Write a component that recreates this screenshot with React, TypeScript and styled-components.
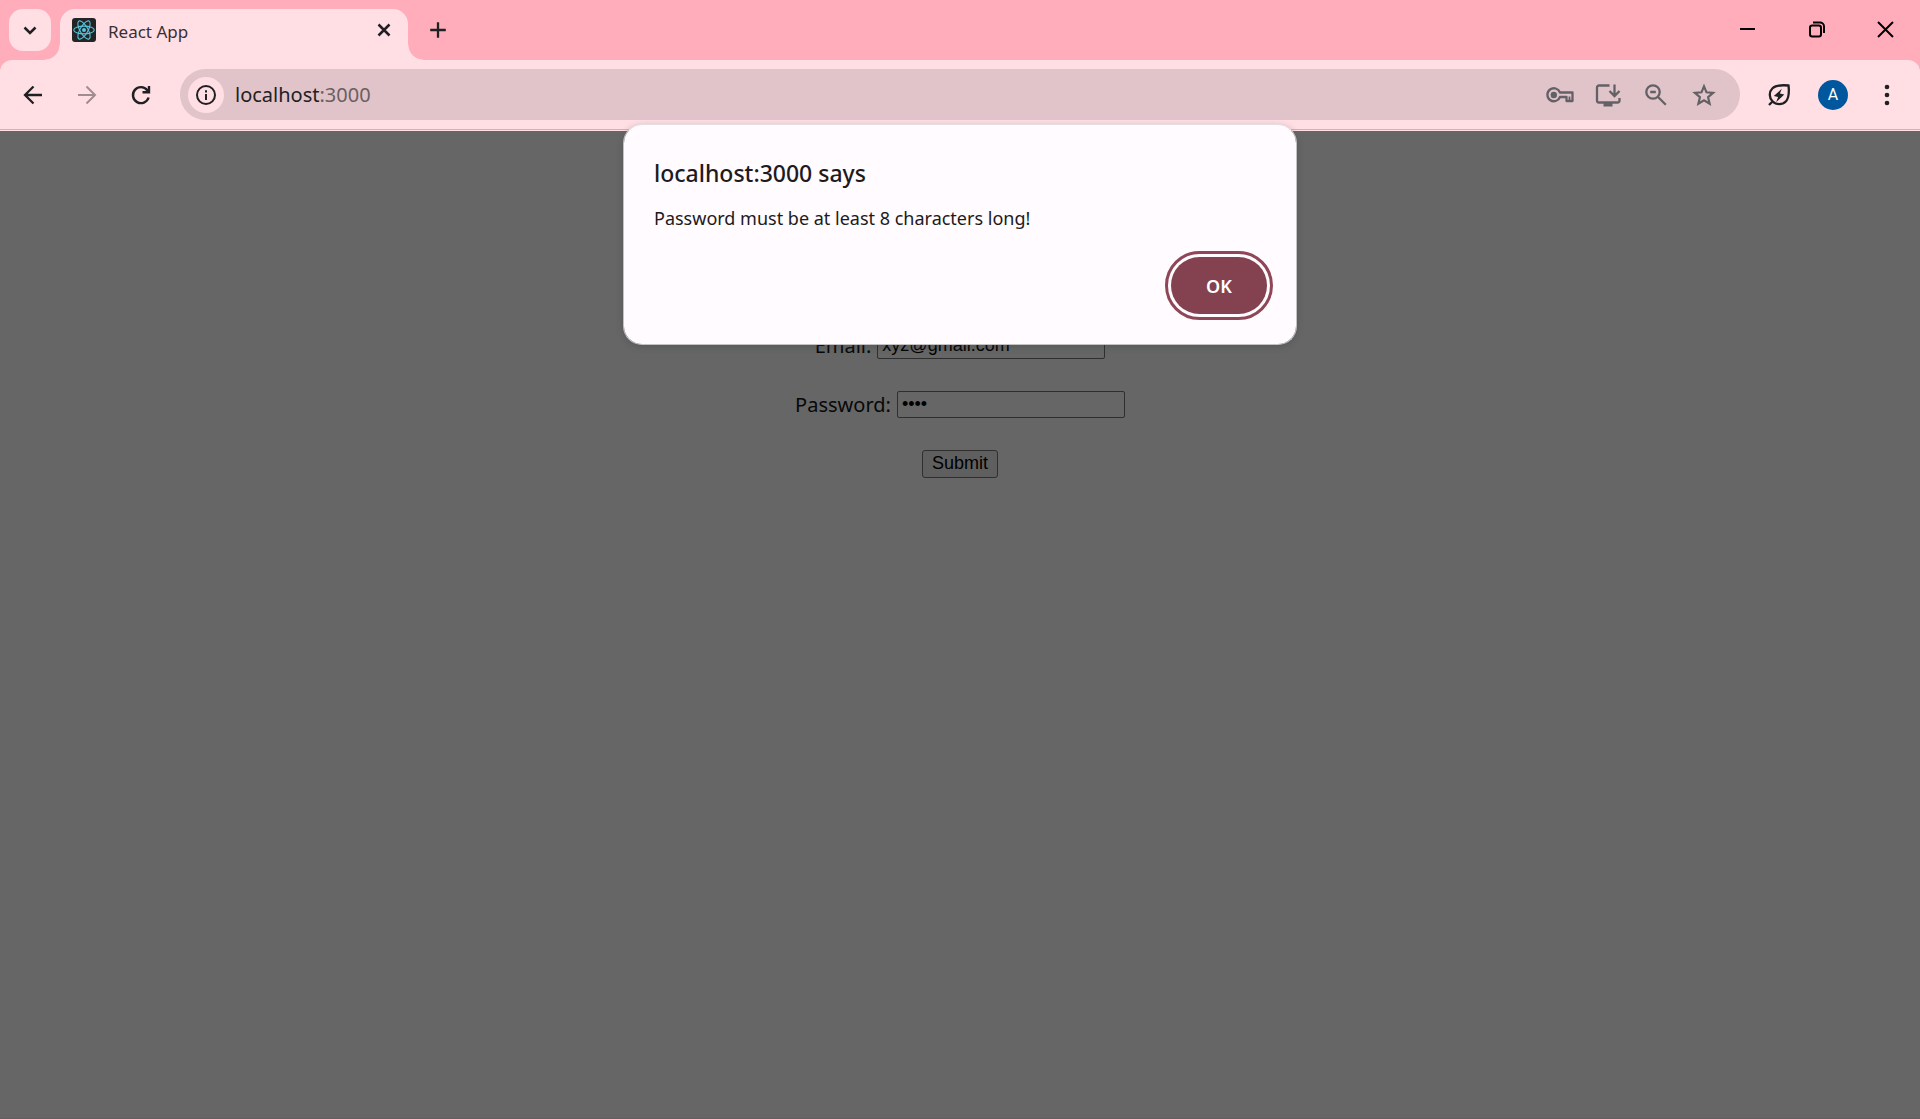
import React, { useState } from "react";
import styled, { createGlobalStyle } from "styled-components";

const UI_FONT = `"Segoe UI", "Noto Sans", "Open Sans", sans-serif`;
const INK = "#1f2023";

const GlobalStyle = createGlobalStyle`
  *, *::before, *::after { box-sizing: border-box; }
  body { margin: 0; background: #666; font-family: ${UI_FONT}; }
  button, input { font-family: inherit; }
`;

const Window = styled.div`
  min-height: 100vh;
  display: flex;
  flex-direction: column;
`;

const TabStrip = styled.header`
  height: 60px;
  display: flex;
  align-items: flex-end;
  padding-left: 9px;
  background: #ffadbb;
`;

const IconButton = styled.button<{ $w?: number; $h?: number }>`
  width: ${(p) => p.$w ?? 36}px;
  height: ${(p) => p.$h ?? 36}px;
  flex: none;
  display: grid;
  place-items: center;
  padding: 0;
  border: 0;
  background: none;
  color: ${INK};
  &:disabled { color: #a08d92; }
`;

const TabSearch = styled(IconButton)`
  align-self: center;
  border-radius: 14px;
  background: #ffdfe4;
`;

const Tab = styled.div`
  position: relative;
  width: 348px;
  height: 51px;
  margin-left: 9px;
  padding: 0 6px 9px 12px;
  display: flex;
  align-items: center;
  gap: 12px;
  border-radius: 15px 15px 0 0;
  background: #ffdfe4;
  &::before, &::after {
    content: "";
    position: absolute;
    bottom: 0;
    width: 15px;
    height: 15px;
  }
  &::before {
    right: 100%;
    background: radial-gradient(circle at 0 0, transparent 14px, #ffdfe4 15px);
  }
  &::after {
    left: 100%;
    background: radial-gradient(circle at 100% 0, transparent 14px, #ffdfe4 15px);
  }
`;

const TabTitle = styled.span`
  flex: 1;
  padding-top: 4px;
  font-size: 17px;
  line-height: 24px;
  color: #3a2f32;
`;

const WindowControls = styled.div`
  margin-left: auto;
  align-self: stretch;
  display: flex;
  color: #000;
  button { color: #000; }
`;

const Toolbar = styled.div`
  background: #ffadbb;
`;

const ToolbarSurface = styled.div`
  height: 71px;
  display: flex;
  align-items: center;
  padding: 0 15px 2px;
  border-radius: 12px 12px 0 0;
  background: linear-gradient(#d0b3b8, #d0b3b8) 0 69px / 100% 1px no-repeat #ffdfe4;
`;

const NavButtons = styled.nav`
  display: flex;
  gap: 18px;
  margin-right: 21px;
`;

const AddressBar = styled.div`
  flex: 1;
  height: 51px;
  display: flex;
  align-items: center;
  padding: 0 18px 0 8px;
  border-radius: 26px;
  background: #e0c4c9;
`;

const SiteInfo = styled(IconButton)`
  border-radius: 50%;
  background: #ffdfe4;
`;

const Url = styled.div`
  flex: 1;
  margin-left: 11px;
  font-size: 20px;
  line-height: 26px;
  color: ${INK};
  span { color: #6b5f63; }
`;

const AddressActions = styled.div`
  display: flex;
  gap: 12px;
  button { color: #636165; }
`;

const ToolbarActions = styled.div`
  display: flex;
  gap: 18px;
  margin-left: 21px;
`;

const Avatar = styled.span`
  width: 30px;
  height: 30px;
  display: grid;
  place-items: center;
  border-radius: 50%;
  background: #00579e;
  color: #fff;
  font: 16px/30px Roboto, sans-serif;
`;

const Page = styled.main`
  flex: 1;
  padding-top: 201px;
  border-bottom: 1px solid #625d60;
  background: #666;
`;

const Form = styled.form`
  display: flex;
  flex-direction: column;
  align-items: center;
  gap: 32px;
`;

const Field = styled.label`
  display: flex;
  align-items: center;
  gap: 6px;
  font-size: 20px;
  line-height: 24px;
  color: #080808;
`;

const TextBox = styled.input`
  && { font: 18px "Liberation Sans", Arial, sans-serif; }
  width: 228px;
  height: 27px;
  padding: 1px 4px;
  border: 1px solid #2f2f2f;
  border-radius: 2px;
  outline: 0;
  background: #666;
  color: #000;
`;

const Submit = styled.button`
  && { font: 18px "Liberation Sans", Arial, sans-serif; }
  height: 28px;
  padding: 0 9px 2px;
  border: 1px solid #2f2f2f;
  border-radius: 3px;
  background: #5f5f5f;
  color: #000;
`;

const Dialog = styled.section`
  position: absolute;
  top: 124px;
  left: 50%;
  transform: translateX(-50%);
  width: 674px;
  display: flex;
  flex-direction: column;
  padding: 33px 29px 30px 30px;
  border: 1px solid #c4c2c3;
  border-top-color: #e6dfe1;
  border-radius: 19px;
  background: #fffbff;
  background-clip: padding-box;
  box-shadow: 0 2px 6px rgba(60, 64, 67, 0.35);
  color: #201a1b;
`;

const DialogTitle = styled.h1`
  margin: 0;
  font-size: 23px;
  line-height: 30px;
  font-weight: 500;
`;

const DialogText = styled.p`
  margin: 17px 0 0;
  font-size: 18px;
  line-height: 26px;
`;

const OkButton = styled.button`
  align-self: flex-end;
  width: 96px;
  height: 57px;
  margin-top: 26px;
  border: 0;
  border-radius: 29px;
  outline: 3px solid #8f4656;
  outline-offset: 3px;
  background: #844250;
  color: #fff;
  font-size: 18px;
  font-weight: 600;
`;

type GlyphProps = { size: number; children: React.ReactNode; box?: number; stroke?: number };

const Glyph = ({ size, children, box = 24, stroke = 2 }: GlyphProps) => (
  <svg width={size} height={size} viewBox={`0 0 ${box} ${box}`} fill="none" stroke="currentColor" strokeWidth={stroke} aria-hidden="true">
    {children}
  </svg>
);

const ReactLogo = () => (
  <svg width="24" height="24" viewBox="0 0 24 24" aria-hidden="true">
    <rect width="24" height="24" rx="3" fill="#222425" />
    <g fill="none" stroke="#58c4dc" strokeWidth="1.1">
      {[0, 60, 120].map((a) => (
        <ellipse key={a} cx="12" cy="12" rx="10.3" ry="3.9" transform={`rotate(${a} 12 12)`} />
      ))}
    </g>
    <circle cx="12" cy="12" r="2" fill="#58c4dc" />
  </svg>
);

const Browser = () => (
  <>
    <TabStrip>
      <TabSearch $w={42} $h={42} aria-label="Search tabs">
        <Glyph size={24} stroke={2.5}><path d="M6.5 9.5 12 15l5.5-5.5" /></Glyph>
      </TabSearch>
      <Tab>
        <ReactLogo />
        <TabTitle>React App</TabTitle>
        <IconButton aria-label="Close tab">
          <Glyph size={24} stroke={2.5}><path d="m6.500 6.500 11 11M17.500 6.500l-11 11" /></Glyph>
        </IconButton>
      </Tab>
      <IconButton $w={60} $h={60} aria-label="New tab">
        <Glyph size={24} stroke={2.3}><path d="M12 4.200v15.600M4.200 12h15.600" /></Glyph>
      </IconButton>
      <WindowControls>
        <IconButton $w={69} $h={58} aria-label="Minimize">
          <Glyph size={24}><path d="M4 12h15" /></Glyph>
        </IconButton>
        <IconButton $w={69} $h={58} aria-label="Restore">
          <Glyph size={24} stroke={2}>
            <rect x="5" y="8.500" width="11" height="11" rx="2.200" />
            <path d="M8 5.500H15a4 4 0 0 1 4 4v6.500" />
          </Glyph>
        </IconButton>
        <IconButton $w={69} $h={58} aria-label="Close">
          <Glyph size={24} stroke={2}><path d="m4 5 15 15M19 5l-15 15" /></Glyph>
        </IconButton>
      </WindowControls>
    </TabStrip>
    <Toolbar>
      <ToolbarSurface>
        <NavButtons>
          <IconButton aria-label="Back">
            <Glyph size={24} stroke={2.3}><path d="M21 12H4.500M12.500 3.500 4 12l8.500 8.500" /></Glyph>
          </IconButton>
          <IconButton aria-label="Forward" disabled>
            <Glyph size={24}><path d="M3 12h16.500M11.500 3.500 20 12l-8.500 8.500" /></Glyph>
          </IconButton>
          <IconButton aria-label="Reload">
            <Glyph size={24} stroke={2.4}>
              <path d="M19.600 14.500A8 8 0 1 1 18.300 7.200L20 9M20 3v6.300h-6.500" />
            </Glyph>
          </IconButton>
        </NavButtons>
        <AddressBar>
          <SiteInfo aria-label="View site information">
            <Glyph size={24}>
              <circle cx="12" cy="12" r="9" />
              <path d="M12 11v6M12 7.200v2.200" />
            </Glyph>
          </SiteInfo>
          <Url>localhost<span>:3000</span></Url>
          <AddressActions>
            <IconButton aria-label="Passwords">
              <Glyph size={30} box={30} stroke={2.3}>
                <path d="M15 12.500H27.500v8.500h-6v-4H15a6.500 6.500 0 1 1 0-4.500Z" strokeLinejoin="round" />
                <path d="M24.500 16.500v4" strokeWidth="1.8" />
                <circle cx="8.800" cy="15" r="3.200" fill="currentColor" stroke="none" />
              </Glyph>
            </IconButton>
            <IconButton aria-label="Install app">
              <Glyph size={28} box={28} stroke={2.3}>
                <path d="M15.500 4.500H5a2 2 0 0 0-2 2v13a2 2 0 0 0 2 2h18.500a2 2 0 0 0 2-2V17M20.500 3.500v11M15.500 10l5 5 5-5" />
                <path d="M9.500 21.500h9v4h-9z" fill="currentColor" stroke="none" />
              </Glyph>
            </IconButton>
            <IconButton aria-label="Zoom">
              <Glyph size={24} stroke={2.3}>
                <circle cx="9" cy="9" r="6.700" />
                <path d="m13.800 13.800 8 8M6.200 9h5.600" />
              </Glyph>
            </IconButton>
            <IconButton aria-label="Bookmark this tab">
              <Glyph size={24} stroke={2.2}>
                <path d="m12 3.300 2.500 6 6.600.600-5 4.300 1.500 6.500-5.600-3.500-5.600 3.500 1.500-6.500-5-4.300 6.600-.600Z" />
              </Glyph>
            </IconButton>
          </AddressActions>
        </AddressBar>
        <ToolbarActions>
          <IconButton aria-label="Energy saver">
            <Glyph size={24} stroke={2.3}>
              <path d="M21.500 2.500c.800 7 .600 12.200-2.500 15.700a9.400 9.400 0 0 1-13.500 0 9 9 0 0 1 0-12.900C8.500 2.500 14 1.800 21.500 2.500ZM5.500 18.500 2 22" />
              <path d="m14.800 5.800-8 7.300 4.300 1-2 5.100 8.200-7.600-4.400-1Z" fill="currentColor" stroke="none" />
            </Glyph>
          </IconButton>
          <IconButton aria-label="Profile"><Avatar>A</Avatar></IconButton>
          <IconButton aria-label="Menu">
            <Glyph size={24}>
              <g fill="currentColor" stroke="none">
                <circle cx="12" cy="4" r="2.300" />
                <circle cx="12" cy="12" r="2.300" />
                <circle cx="12" cy="20" r="2.300" />
              </g>
            </Glyph>
          </IconButton>
        </ToolbarActions>
      </ToolbarSurface>
    </Toolbar>
  </>
);

export default function App() {
  const [email, setEmail] = useState("xyz@gmail.com");
  const [password, setPassword] = useState("1234");
  const [open, setOpen] = useState(true);

  const submit = (e: React.FormEvent) => {
    e.preventDefault();
    setOpen(password.length < 8);
  };

  return (
    <Window>
      <GlobalStyle />
      <Browser />
      <Page>
        <Form onSubmit={submit}>
          <Field>
            Email:
            <TextBox type="email" value={email} onChange={(e) => setEmail(e.target.value)} />
          </Field>
          <Field>
            Password:
            <TextBox type="password" value={password} onChange={(e) => setPassword(e.target.value)} />
          </Field>
          <Submit type="submit">Submit</Submit>
        </Form>
      </Page>
      {open && (
        <Dialog role="alertdialog" aria-labelledby="alert-title" aria-describedby="alert-text">
          <DialogTitle id="alert-title">localhost:3000 says</DialogTitle>
          <DialogText id="alert-text">Password must be at least 8 characters long!</DialogText>
          <OkButton type="button" onClick={() => setOpen(false)}>OK</OkButton>
        </Dialog>
      )}
    </Window>
  );
}
